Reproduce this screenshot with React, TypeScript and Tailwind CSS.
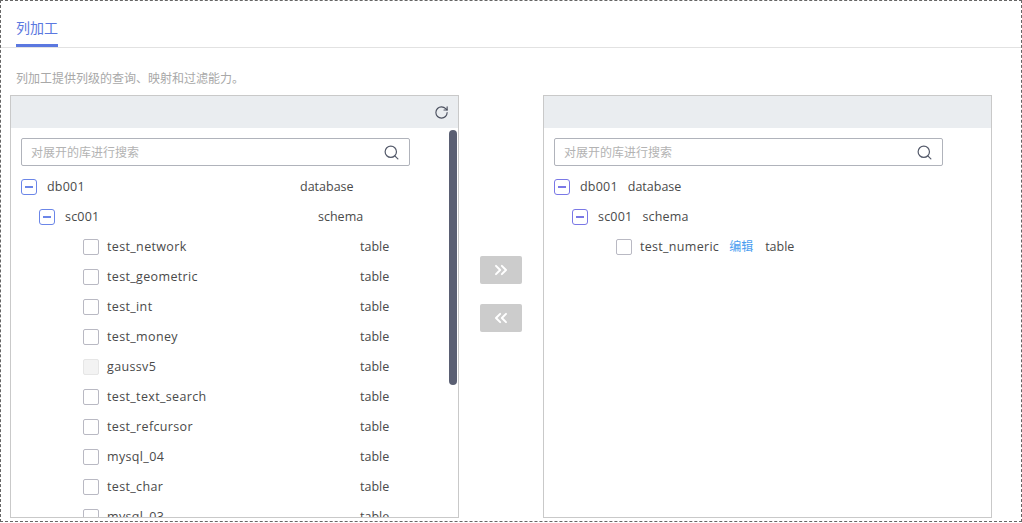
import { ChevronsLeft, ChevronsRight, RotateCw, Search } from "lucide-react";

const font = "font-['Open_Sans','Noto_Sans_CJK_SC',sans-serif]";

const tables = ["test_network", "test_geometric", "test_int", "test_money", "gaussv5", "test_text_search", "test_refcursor", "mysql_04", "test_char", "mysql_03"];

function Toggle({ purple }: { purple?: boolean }) {
  return (
    <span className={`flex h-[16px] w-[16px] shrink-0 items-center justify-center rounded-[3px] border-[1.5px] bg-white ${purple ? "border-[#7a78e6]" : "border-[#6b86e8]"}`}>
      <span className={`h-[2px] w-[8px] ${purple ? "bg-[#7a78e6]" : "bg-[#6b86e8]"}`} />
    </span>
  );
}

function Check({ disabled }: { disabled?: boolean }) {
  return <span className={`h-[16px] w-[16px] shrink-0 rounded-[2px] border ${disabled ? "border-[#e6e6e6] bg-[#f3f3f3]" : "border-[#b9b9c3] bg-white"}`} />;
}

function SearchBox() {
  return (
    <div className="mx-[10px] mt-[10px] flex h-[28px] w-[389px] shrink-0 items-center justify-between rounded-[2px] border border-[#b0b3bb] bg-white pl-[9px] pr-[9px]">
      <span className="pt-[2px] text-[12px] text-[#b3b3b3]">对展开的库进行搜索</span>
      <Search size={17} strokeWidth={1.7} className="text-[#555b6b]" />
    </div>
  );
}

function Row({ indent, icon, label, type, gap, name }: { indent: string; icon: React.ReactNode; label: string; type: string; gap: string; name: string }) {
  return (
    <div className={`flex h-[30px] shrink-0 items-center text-[12.5px] text-[#4a4a4a] ${indent}`}>
      {icon}
      <span className={`w-[253px] shrink-0 ${gap} ${name}`}>{label}</span>
      <span>{type}</span>
    </div>
  );
}

export default function App() {
  return (
    <div className={`${font} h-[522px] w-[1022px] overflow-hidden border border-dashed border-[#666] bg-white`}>
      <div className="flex h-[47px] items-end border-b border-[#e2e2e2]">
        <div className="ml-[15px] flex h-[47px] flex-col justify-end border-b-[3px] border-[#5b78e0] pb-[6px] text-[14px] leading-[20px] text-[#5b78e0]">列加工</div>
      </div>
      <p className="ml-[15px] mt-[22px] text-[12px] leading-[17px] text-[#a8a8a8]">列加工提供列级的查询、映射和过滤能力。</p>
      <div className="ml-[9px] mt-[8px] flex">
        <section className="relative flex h-[423px] w-[449px] flex-col overflow-hidden border border-[#c9c9c9]">
          <div className="flex h-[32px] shrink-0 items-center justify-end bg-[#eaedf0] pr-[9px]">
            <RotateCw size={15} strokeWidth={1.8} className="text-[#4a4f5e]" />
          </div>
          <SearchBox />
          <div className="mt-[6px] flex shrink-0 flex-col">
            <Row indent="pl-[10px]" icon={<Toggle />} label="db001" type="database" gap="ml-[10px]" name="tracking-[0.2px]" />
            <Row indent="pl-[28px]" icon={<Toggle />} label="sc001" type="schema" gap="ml-[10px]" name="tracking-[0.2px]" />
            {tables.map((t) => (
              <Row key={t} indent="pl-[72px]" icon={<Check disabled={t === "gaussv5"} />} label={t} type="table" gap="ml-[8px]" name="tracking-[0.35px]" />
            ))}
          </div>
          <div className="absolute left-[438px] top-[34px] h-[255px] w-[8px] rounded-[4px] bg-[#5a5f73]" />
        </section>
        <div className="flex w-[84px] shrink-0 flex-col items-center gap-[20px] pt-[161px]">
          <button className="flex h-[28px] w-[42px] items-center justify-center rounded-[2px] bg-[#cccccc]">
            <ChevronsRight size={20} strokeWidth={2.4} className="text-white" />
          </button>
          <button className="flex h-[28px] w-[42px] items-center justify-center rounded-[2px] bg-[#cccccc]">
            <ChevronsLeft size={20} strokeWidth={2.4} className="text-white" />
          </button>
        </div>
        <section className="flex h-[423px] w-[449px] flex-col overflow-hidden border border-[#c9c9c9]">
          <div className="h-[32px] shrink-0 bg-[#eaedf0]" />
          <SearchBox />
          <div className="mt-[6px] flex flex-col text-[12.5px] text-[#4a4a4a]">
            <div className="flex h-[30px] items-center pl-[10px]">
              <Toggle purple />
              <span className="ml-[10px] tracking-[0.2px]">db001</span>
              <span className="ml-[10px]">database</span>
            </div>
            <div className="flex h-[30px] items-center pl-[28px]">
              <Toggle purple />
              <span className="ml-[10px] tracking-[0.2px]">sc001</span>
              <span className="ml-[10px] tracking-[0.2px]">schema</span>
            </div>
            <div className="flex h-[30px] items-center pl-[72px]">
              <Check />
              <span className="ml-[8px] tracking-[0.3px]">test_numeric</span>
              <span className="ml-[10px] text-[12px] text-[#4a9df0]">编辑</span>
              <span className="ml-[12px]">table</span>
            </div>
          </div>
        </section>
      </div>
    </div>
  );
}
